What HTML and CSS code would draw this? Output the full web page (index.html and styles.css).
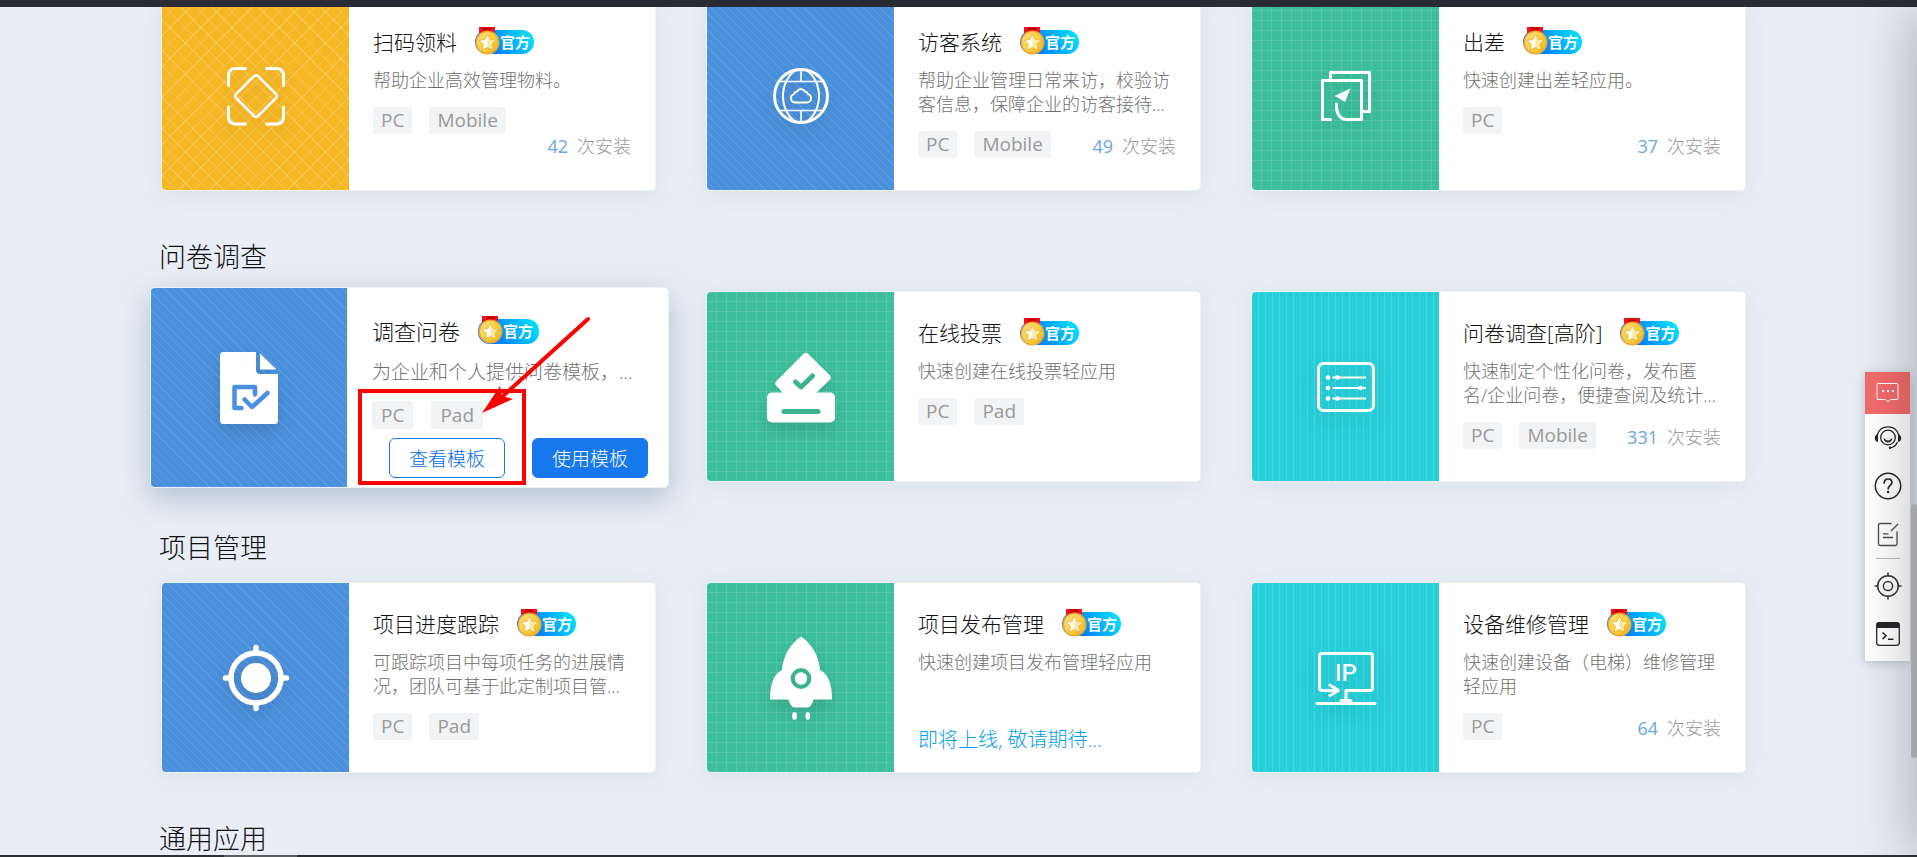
FILE: index.html
```html
<!DOCTYPE html>
<html lang="zh-CN">
<head>
<meta charset="utf-8">
<title>模板中心</title>
<link rel="stylesheet" href="styles.css">
</head>
<body>
<svg class="defs" aria-hidden="true">
  <defs>
    <linearGradient id="gold" x1="0" y1="0" x2="1" y2="1">
      <stop offset="0" stop-color="#ffe27a"/><stop offset=".55" stop-color="#f8cf3c"/><stop offset="1" stop-color="#f0b020"/>
    </linearGradient>
    <symbol id="medal" viewBox="0 0 25 28">
      <path d="M4 0h16v6H4z" fill="#f01020"/><path d="M8 0h8v6H8z" fill="#c00"/>
      <circle cx="12.5" cy="15.5" r="12" fill="#f0a830"/>
      <circle cx="12.5" cy="15.5" r="10.500" fill="url(#gold)"/>
      <path d="M12.500 7.200l2.600 5.300 5.700.8-4.100 4 1 5.800-5.200-2.800-5.200 2.800 1-5.800-4.100-4 5.700-.8z" fill="#fffdf0" stroke="#e6b040" stroke-width=".8" stroke-linejoin="round"/>
      <path d="M12.500 8.500v11.300l4.200 2.200-.8-4.900 3.600-3.400-4.900-.7z" fill="#fbe9a0"/>
    </symbol>
  </defs>
</svg>

<header class="topbar"></header>

<main class="page">
  <section class="group">
    <div class="cards">
      <article class="card">
        <div class="cover yellow">
          <svg viewBox="-40 -45 80 90" fill="none" stroke="#fff" stroke-width="3" stroke-linecap="round" stroke-linejoin="round">
            <path d="M-27.500-10.500V-21a6.500 6.500 0 0 1 6.500-6.500h10.500M10.500-27.500H21a6.500 6.500 0 0 1 6.500 6.500v10.500M27.500 11v10.500a6.500 6.500 0 0 1-6.500 6.500H10.500M-10.500 28H-21a6.500 6.500 0 0 1-6.500-6.500V11"/>
            <path stroke-width="2.500" d="M-2-19.800a3 3 0 0 1 4 0L20-2a3 3 0 0 1 0 4L2 20a3 3 0 0 1-4 0L-20 2a3 3 0 0 1 0-4z"/>
          </svg>
        </div>
        <div class="body">
          <div class="info">
            <h3 class="title">扫码领料<span class="badge"><svg><use href="#medal"/></svg>官方</span></h3>
            <p class="desc">帮助企业高效管理物料。</p>
            <div class="tags"><span class="tag">PC</span><span class="tag">Mobile</span></div>
          </div>
          <p class="installs"><span class="count">42</span>次安装</p>
        </div>
      </article>

      <article class="card">
        <div class="cover blue">
          <svg viewBox="-40 -45 80 90" fill="none" stroke="#fff" stroke-width="2">
            <circle r="26.500" stroke-width="3"/>
            <path d="M0-27v12.500M0 14.500V27M-22-14.500h44M-22 14.500h44" stroke-width="1.600"/>
            <path d="M-5-26c-8 5-13 15-13 26s5 21 13 26M5-26c8 5 13 15 13 26s-5 21-13 26"/>
            <path d="M-6 6.500a4.300 4.300 0 0 1-1-8.400 3.500 3.500 0 0 1 3-2.600 4.500 4.500 0 0 1 8 0 3.500 3.500 0 0 1 3 2.600 4.300 4.300 0 0 1-1 8.400z" stroke-width="1.800"/>
          </svg>
        </div>
        <div class="body">
          <div class="info">
            <h3 class="title">访客系统<span class="badge"><svg><use href="#medal"/></svg>官方</span></h3>
            <p class="desc">帮助企业管理日常来访，校验访<br>客信息，保障企业的访客接待...</p>
            <div class="tags"><span class="tag">PC</span><span class="tag">Mobile</span></div>
          </div>
          <p class="installs"><span class="count">49</span>次安装</p>
        </div>
      </article>

      <article class="card">
        <div class="cover green">
          <svg viewBox="-40 -45 80 90" fill="none" stroke="#fff" stroke-width="3" stroke-linecap="round" stroke-linejoin="round">
            <path d="M-15.500-17v-6.500h39V15.500H17"/>
            <path d="M-15.500 23.500h-8v-39h39v39H1c-7 0-11-6-10.500-15.500"/>
            <path d="M4.500-7.500L-11.500 0l5 2.500L-1 6z" fill="#fff" stroke="none"/>
          </svg>
        </div>
        <div class="body">
          <div class="info">
            <h3 class="title">出差<span class="badge"><svg><use href="#medal"/></svg>官方</span></h3>
            <p class="desc">快速创建出差轻应用。</p>
            <div class="tags"><span class="tag">PC</span></div>
          </div>
          <p class="installs"><span class="count">37</span>次安装</p>
        </div>
      </article>
    </div>
  </section>

  <section class="group">
    <h2 class="heading">问卷调查</h2>
    <div class="cards">
      <article class="card active">
        <div class="cover blue">
          <svg viewBox="-40 -45 80 90">
            <path fill="#fff" d="M-25-36H7v18a4 4 0 0 0 4 4h18v46.500a3.500 3.500 0 0 1-3.500 3.500h-51a3.500 3.500 0 0 1-3.500-3.500v-65A3.500 3.500 0 0 1-25.500-36zM11-34.500L27.500-18.500H11z"/>
            <path fill="none" stroke="#4a90e2" stroke-width="4.500" stroke-linecap="round" stroke-linejoin="round" d="M-7.500 20H-14.500V-1H6V6.500M-4.500 11.500L3 19 18.500 5"/>
          </svg>
        </div>
        <div class="body">
          <div class="info">
            <h3 class="title">调查问卷<span class="badge"><svg><use href="#medal"/></svg>官方</span></h3>
            <p class="desc">为企业和个人提供问卷模板，...</p>
            <div class="tags"><span class="tag">PC</span><span class="tag">Pad</span></div>
          </div>
          <div class="actions">
            <button type="button" class="btn">查看模板</button>
            <button type="button" class="btn primary">使用模板</button>
          </div>
        </div>
        <svg class="note" viewBox="0 0 240 176" aria-hidden="true">
          <rect x="2" y="74" width="164" height="92" fill="none" stroke="#f00" stroke-width="4"/>
          <path d="M230 2L145 79" stroke="#f00" stroke-width="4" stroke-linecap="round"/>
          <path d="M124 96l18-27 2 10 11 3z" fill="#f00"/>
        </svg>
      </article>

      <article class="card">
        <div class="cover green">
          <svg viewBox="-40 -45 80 90">
            <path fill="#fff" d="M2.800-33.500q2-1.500 4 0L29-11.500q1.500 2 0 4L15.500 5.500H29a5 5 0 0 1 5 5v20a5 5 0 0 1-5 5h-58a5 5 0 0 1-5-5v-20a5 5 0 0 1 5-5h10.500L-25-1.500q-1.500-2 0-4z"/>
            <path fill="none" stroke="#3cb390" stroke-width="5" stroke-linecap="round" stroke-linejoin="round" d="M-5.500-5L0 0 11.500-11M-17 24.500h34"/>
          </svg>
        </div>
        <div class="body">
          <div class="info">
            <h3 class="title">在线投票<span class="badge"><svg><use href="#medal"/></svg>官方</span></h3>
            <p class="desc">快速创建在线投票轻应用</p>
            <div class="tags"><span class="tag">PC</span><span class="tag">Pad</span></div>
          </div>
        </div>
      </article>

      <article class="card">
        <div class="cover teal">
          <svg viewBox="-40 -45 80 90" fill="none" stroke="#fff" stroke-width="2">
            <rect x="-27.500" y="-23.500" width="55" height="47" rx="5" stroke-width="3"/>
            <path d="M-13.500-9.500H20M-13.500 1H20M-13.500 11.500H20" stroke-width="1.800"/>
            <g fill="#fff" stroke="none">
              <circle cx="-18" cy="-9.500" r="2.300"/><circle cx="-18" cy="1" r="2.300"/><circle cx="-18" cy="11.500" r="2.300"/>
              <circle cx="-8.500" cy="-9.500" r="2.300"/><circle cx="14.500" cy="1" r="2.300"/><circle cx="-8.500" cy="11.500" r="2.300"/>
            </g>
          </svg>
        </div>
        <div class="body">
          <div class="info">
            <h3 class="title">问卷调查[高阶]<span class="badge"><svg><use href="#medal"/></svg>官方</span></h3>
            <p class="desc">快速制定个性化问卷，发布匿<br>名/企业问卷，便捷查阅及统计...</p>
            <div class="tags"><span class="tag">PC</span><span class="tag">Mobile</span></div>
          </div>
          <p class="installs"><span class="count">331</span>次安装</p>
        </div>
      </article>
    </div>
  </section>

  <section class="group">
    <h2 class="heading">项目管理</h2>
    <div class="cards">
      <article class="card">
        <div class="cover blue">
          <svg viewBox="-40 -45 80 90" fill="none" stroke="#fff" stroke-width="5.500" stroke-linecap="round">
            <circle r="25"/>
            <circle r="15" fill="#fff" stroke="none"/>
            <path d="M0-30.500v4M0 26.500v4M-30.500 0h4M26.500 0h4"/>
          </svg>
        </div>
        <div class="body">
          <div class="info">
            <h3 class="title">项目进度跟踪<span class="badge"><svg><use href="#medal"/></svg>官方</span></h3>
            <p class="desc">可跟踪项目中每项任务的进展情<br>况，团队可基于此定制项目管...</p>
            <div class="tags"><span class="tag">PC</span><span class="tag">Pad</span></div>
          </div>
        </div>
      </article>

      <article class="card">
        <div class="cover green">
          <svg viewBox="-40 -45 80 90">
            <path fill="#fff" d="M0-41.500C11-34 18-22 19-8c8 4 12 13 12 29.500H12.500C11.500 26 9 29.500 6 29.500H-6c-3 0-5.500-3.500-6.500-8H-31C-31 5-27-4-19-8-18-22-11-34 0-41.500z"/>
            <circle cy=".5" r="8.300" fill="none" stroke="#3cb390" stroke-width="4.200"/>
            <path stroke="#fff" stroke-width="4.600" stroke-linecap="round" d="M-6.500 36.500v3M6.800 36.500v3"/>
          </svg>
        </div>
        <div class="body">
          <div class="info">
            <h3 class="title">项目发布管理<span class="badge"><svg><use href="#medal"/></svg>官方</span></h3>
            <p class="desc">快速创建项目发布管理轻应用</p>
          </div>
          <p class="soon">即将上线, 敬请期待...</p>
        </div>
      </article>

      <article class="card">
        <div class="cover teal">
          <svg viewBox="-40 -45 80 90" fill="none" stroke="#fff" stroke-width="3" stroke-linecap="round" stroke-linejoin="round">
            <path d="M-24.500 12.500a2.500 2.500 0 0 1-2-2.500v-32a2.500 2.500 0 0 1 2.500-2.500H24a2.500 2.500 0 0 1 2.500 2.500v32a2.500 2.500 0 0 1-2.500 2.500H0V22"/>
            <path d="M-24 12.500H-9M-16 7l8.500 5.500-8.500 5M-5 22.500H5M-29 25.500H29"/>
            <text class="ip" x="0" y="2.500" text-anchor="middle">IP</text>
          </svg>
        </div>
        <div class="body">
          <div class="info">
            <h3 class="title">设备维修管理<span class="badge"><svg><use href="#medal"/></svg>官方</span></h3>
            <p class="desc">快速创建设备（电梯）维修管理<br>轻应用</p>
            <div class="tags"><span class="tag">PC</span></div>
          </div>
          <p class="installs"><span class="count">64</span>次安装</p>
        </div>
      </article>
    </div>
  </section>

  <section class="group">
    <h2 class="heading">通用应用</h2>
  </section>
</main>

<nav class="tools" aria-label="快捷工具">
  <button type="button" class="tool chat" aria-label="消息">
    <svg viewBox="0 0 28 28" fill="none" stroke="#fff" stroke-width="1"><path d="M4 4.500h19a1 1 0 0 1 1 1v14a1 1 0 0 1-1 1h-6.500L14 22.800 11.500 20.500H4a1 1 0 0 1-1-1v-14a1 1 0 0 1 1-1z"/><path stroke-width="2" d="M8 12h2M13 12h2M18 12h2"/></svg>
  </button>
  <button type="button" class="tool" aria-label="客服">
    <svg viewBox="0 0 28 28" fill="none" stroke="#26282c" stroke-width="1.300"><circle cx="14" cy="13.500" r="7.300"/><path d="M3.500 10.500C5 5.500 9 2.800 14 2.800s9 2.700 10.500 7.700M23.500 18c-1.500 3.500-4 5.500-7.500 5.800"/><path fill="#26282c" stroke="none" d="M4 9.500v8.500C1.500 17.500.8 15.500.8 14S2 10.500 4 9.500zM24 9.500v8.500c2.500-.5 3.200-2.500 3.200-4S26 10.500 24 9.500zM9.500 14.500h9c-.7 2.600-2.400 4-4.500 4s-3.800-1.400-4.500-4z"/><path fill="#fff" stroke="none" d="M10.500 14.300h7c-1 1.700-2 2.200-3.500 2.200s-2.600-.5-3.500-2.200z"/><circle cx="16" cy="23.800" r="1.200" fill="#26282c" stroke="none"/></svg>
  </button>
  <button type="button" class="tool" aria-label="帮助">
    <svg viewBox="0 0 28 28" fill="none" stroke="#26282c" stroke-width="1.500"><circle cx="14" cy="14" r="12.700"/><path stroke-width="1.700" stroke-linecap="round" d="M10.200 11c0-2.400 1.500-4 3.800-4s3.900 1.400 3.900 3.500c0 2.700-3.700 3.100-3.700 6.300"/><circle cx="14.100" cy="20" r="1.200" fill="#26282c" stroke="none"/></svg>
  </button>
  <button type="button" class="tool" aria-label="反馈">
    <svg viewBox="0 0 28 28" fill="none" stroke="#4a4c50" stroke-width="1.300"><path d="M17.500 3.500H6A1.500 1.500 0 0 0 4.500 5v19A1.500 1.500 0 0 0 6 25.500h15.500A1.500 1.500 0 0 0 23 24V11.500M17 11l7-7M9 13.800h5.500M9 17.500h10"/></svg>
  </button>
  <hr class="rule">
  <button type="button" class="tool" aria-label="定位">
    <svg viewBox="0 0 28 28" fill="none" stroke="#34383e" stroke-width="1.500"><circle cx="14" cy="14" r="10.300"/><circle cx="14" cy="14" r="4.600"/><path d="M14 .5v4M14 23.500v4M.5 14h4M23.500 14h4"/></svg>
  </button>
  <button type="button" class="tool" aria-label="控制台">
    <svg viewBox="0 0 28 28" fill="none" stroke="#26282c" stroke-width="1.300"><rect x="2.700" y="2.700" width="22.600" height="22.600" rx="2.500"/><path fill="#26282c" stroke="none" d="M2.500 8V4.500a2 2 0 0 1 2-2h19a2 2 0 0 1 2 2V8z"/><path stroke-width="1.500" d="M8.500 12.500l3.500 3.300-3.500 3.300M14 19.300h5.500"/></svg>
  </button>
</nav>

<div class="scroll"></div>
<div class="edge"></div>
<footer class="bottombar"><span></span></footer>
</body>
</html>
```
FILE: styles.css
```css
* { box-sizing: border-box; }

body {
  margin: 0;
  height: 100vh;
  overflow: hidden;
  background: #e8edf6;
  color: #111;
  font-family: "Open Sans", "Noto Sans CJK SC", sans-serif;
  font-weight: 300;
}

h2, h3, p { margin: 0; font-weight: inherit; }

.defs { position: absolute; width: 0; height: 0; }

.topbar {
  position: fixed;
  inset: 0 0 auto;
  z-index: 3;
  height: 7px;
  background: #282b33;
}

.bottombar {
  position: fixed;
  inset: auto 0 0;
  z-index: 3;
  display: flex;
  height: 2px;
  padding-left: 224px;
  background: #2d3032;
}
.bottombar span { width: 73px; background: #5c5f61; }

.page { padding: 0 171px 0 159px; }

.heading {
  padding: 48px 0 16px;
  font-size: 27px;
  line-height: 36px;
}

.cards {
  display: grid;
  grid-template-columns: repeat(3, minmax(0, 1fr));
  gap: 50px;
  padding-left: 2px;
}

.card {
  position: relative;
  display: flex;
  min-height: 191px;
  border: 1px solid #edf1f2;
  border-radius: 5px;
  background: #fff;
  box-shadow: 0 4px 20px rgba(190, 205, 205, .35);
}

.cover {
  display: flex;
  align-items: center;
  justify-content: center;
  flex: none;
  width: 187px;
  border-radius: 4px 0 0 4px;
}
.cover svg {
  width: 80px;
  height: 90px;
  overflow: visible;
  filter: drop-shadow(0 8px 8px rgba(0, 0, 0, .12));
}
.blue {
  background: repeating-linear-gradient(45deg, #4a90dc 0 5px, #5b9cdf 5px 6px);
}
.yellow {
  background:
    repeating-linear-gradient(45deg, transparent 0 10px, rgba(255, 255, 255, .18) 10px 11px),
    repeating-linear-gradient(-45deg, transparent 0 10px, rgba(255, 255, 255, .18) 10px 11px),
    #f5b824;
}
.green {
  background:
    repeating-linear-gradient(90deg, transparent 0 9px, rgba(255, 255, 255, .12) 9px 10px),
    repeating-linear-gradient(transparent 0 9px, rgba(255, 255, 255, .12) 9px 10px),
    #3dbf9c;
}
.teal {
  background: repeating-linear-gradient(90deg, #26cfd9 0 6px, #45d7df 6px 7px);
}
.ip {
  fill: #fff;
  stroke: none;
  font: 500 24px Roboto, sans-serif;
}

.body {
  display: grid;
  flex: 1;
  min-width: 0;
  padding: 23px 24px 30px;
}
.info, .installs, .soon, .actions { grid-area: 1 / 1; }

.title {
  display: flex;
  align-items: center;
  gap: 18px;
  font-size: 21px;
  line-height: 36px;
  white-space: nowrap;
}
.badge {
  display: flex;
  align-items: center;
  height: 24px;
  padding-right: 4px;
  border-radius: 12px;
  background: linear-gradient(60deg, #0078ff 25%, #00dcff 90%);
  color: #fff;
  font-size: 15px;
  font-weight: 700;
  line-height: 24px;
}
.badge svg { width: 25px; height: 28px; margin-top: -3px; }

.desc {
  margin-top: 8px;
  color: #707070;
  font-size: 18px;
  line-height: 24px;
  white-space: nowrap;
}

.tags { display: flex; gap: 17px; margin-top: 15px; }
.tag {
  padding: 0 8px;
  border-radius: 3px;
  background: #f2f3f5;
  color: #999;
  font-size: 19px;
  font-weight: 400;
  line-height: 27px;
}

.installs {
  align-self: end;
  justify-self: end;
  color: #999;
  font-size: 18px;
  line-height: 27px;
}
.count { margin-right: 9px; color: #6ca6e4; font-weight: 400; }

.soon {
  align-self: end;
  margin-bottom: -11px;
  color: #00a0f0;
  font-size: 20px;
  line-height: 27px;
}

/* Raised card with its actions shown */
.card.active {
  margin: -4px -13px -6px -11px;
  box-shadow: 0 10px 30px rgba(140, 165, 185, .6);
}
.active .cover { width: 196px; }
.active .body { padding: 25px 20px 9px 25px; }
.active .title { font-size: 22px; }
.active .badge { height: 25px; padding-right: 6px; }
.active .desc { margin-top: 11px; font-size: 19px; }
.active .tags { gap: 18px; margin-top: 17px; }
.active .tag { padding: 0 9px; line-height: 28px; }
.actions {
  display: flex;
  align-items: center;
  align-self: end;
  justify-self: end;
  gap: 27px;
}
.btn {
  height: 40px;
  padding: 0 19px;
  border: 1px solid #1678ec;
  border-radius: 6px;
  background: #fff;
  color: #0068e8;
  font: inherit;
  font-size: 19px;
}
.btn.primary { background: #1678ec; color: #fff; }

.note {
  position: absolute;
  top: 29px;
  left: 207px;
  width: 240px;
  height: 176px;
  overflow: visible;
  pointer-events: none;
}

.tools {
  position: fixed;
  top: 372px;
  right: 7px;
  width: 45px;
  padding-bottom: 3px;
  background: #fff;
  box-shadow: 0 2px 12px rgba(0, 0, 0, .2);
}
.tool {
  display: flex;
  align-items: center;
  justify-content: center;
  width: 100%;
  height: 48px;
  padding: 0;
  border: 0;
  background: none;
}
.tool svg { width: 28px; height: 28px; }
.tool.chat { height: 42px; background: #f56c6c; }
.rule {
  width: 24px;
  height: 1px;
  margin: 0 auto 3px;
  border: 0;
  background: #b4bcc6;
}

.scroll {
  position: fixed;
  top: 504px;
  right: 0;
  width: 6px;
  height: 254px;
  border-radius: 3px;
  background: #c0c2c4;
}

/* Shade cast in from the right side of the window */
.edge {
  position: fixed;
  inset: 7px -200px 0 auto;
  width: 200px;
  box-shadow: 0 0 60px rgba(0, 0, 0, .3);
  pointer-events: none;
}
```
